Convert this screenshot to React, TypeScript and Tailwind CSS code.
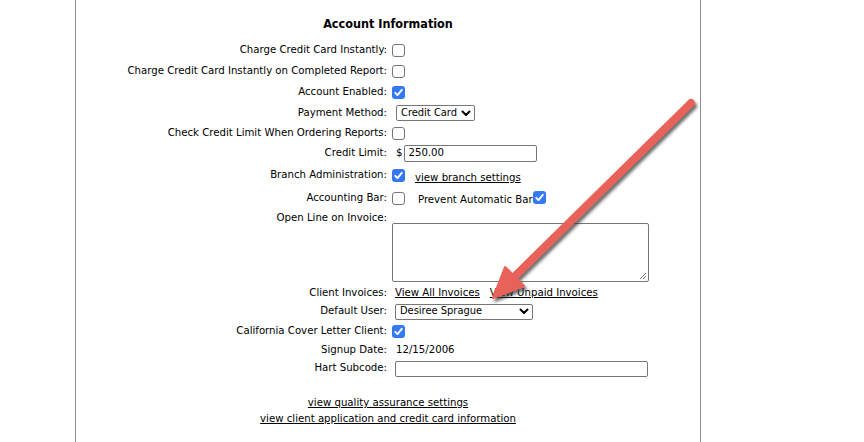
import React from "react";

const font = { fontFamily: '"DejaVu Sans Condensed", "DejaVu Sans", sans-serif' };

function Cb({ checked = false, className = "" }: { checked?: boolean; className?: string }) {
  if (checked) {
    return (
      <span className={"inline-flex h-[13px] w-[13px] shrink-0 items-center justify-center rounded-[3px] bg-[#3478f6] " + className}>
        <svg width="11" height="11" viewBox="0 0 11 11">
          <path d="M2.2 5.8 L4.5 8.1 L8.8 2.8" fill="none" stroke="#fff" strokeWidth="1.9" strokeLinecap="round" strokeLinejoin="round" />
        </svg>
      </span>
    );
  }
  return <span className={"inline-block h-[13px] w-[13px] shrink-0 rounded-[3px] border border-[#767676] bg-white " + className} />;
}

function Chevron() {
  return (
    <svg width="10" height="7" viewBox="0 0 10 7">
      <path d="M1.5 1.5 L5 5 L8.5 1.5" fill="none" stroke="#000" strokeWidth="2" strokeLinecap="round" strokeLinejoin="round" />
    </svg>
  );
}

function Select({ text, w, className = "" }: { text: string; w: string; className?: string }) {
  return (
    <span className={"flex h-[16px] items-center justify-between rounded-[2px] border border-[#767676] bg-white pl-[4px] pr-[3px] text-[11px] " + w + " " + className}>
      <span>{text}</span>
      <Chevron />
    </span>
  );
}

function Row({ label, h, children, top = false }: { label: string; h: string; children?: React.ReactNode; top?: boolean }) {
  return (
    <div className={"flex " + h + (top ? " items-start" : " items-center")}>
      <div className={"w-[311px] shrink-0 text-right " + (top ? "leading-[18px]" : "")}>{label}</div>
      <div className="flex flex-1 items-center pl-[1px]">{children}</div>
    </div>
  );
}

export default function App() {
  return (
    <div className="relative h-[442px] w-[864px] overflow-hidden bg-white text-[11.3px] text-black" style={font}>
      <div className="ml-[75px] h-full w-[626px] border-x border-[#8c8c8c]">
        <div className="flex h-[40px] items-start justify-center pt-[16px] text-[12.5px] font-bold leading-[16px]">Account Information</div>
        <Row label="Charge Credit Card Instantly:" h="h-[21px]"><Cb className="ml-[4px]" /></Row>
        <Row label="Charge Credit Card Instantly on Completed Report:" h="h-[21px]"><Cb className="ml-[4px]" /></Row>
        <Row label="Account Enabled:" h="h-[21px]"><Cb checked className="ml-[4px]" /></Row>
        <Row label="Payment Method:" h="h-[20px]"><Select text="Credit Card" w="w-[79px]" className="ml-[8px]" /></Row>
        <Row label="Check Credit Limit When Ordering Reports:" h="h-[21px]"><Cb className="ml-[4px]" /></Row>
        <Row label="Credit Limit:" h="h-[19px]">
          <span className="ml-[8px]">$</span>
          <span className="ml-[2px] flex h-[17px] w-[133px] items-center rounded-[2px] border border-[#767676] pl-[3px]">250.00</span>
        </Row>
        <Row label="Branch Administration:" h="h-[24px]">
          <Cb checked className="ml-[4px]" />
          <a className="ml-[10px] mt-[7px] underline">view branch settings</a>
        </Row>
        <Row label="Accounting Bar:" h="h-[22px]">
          <Cb className="ml-[4px]" />
          <span className="ml-[13px] mt-[4px]">Prevent Automatic Bar</span>
          <Cb checked className="-mt-[1px]" />
        </Row>
        <Row label="Open Line on Invoice:" h="h-[76px]" top>
          <div className="relative ml-[4px] mt-[14px] h-[59px] w-[257px] rounded-[2px] border border-[#767676]">
            <svg className="absolute bottom-[1px] right-[1px]" width="8" height="8" viewBox="0 0 8 8">
              <path d="M7 1 L1 7 M7 4 L4 7" stroke="#777" strokeWidth="1" />
            </svg>
          </div>
        </Row>
        <Row label="Client Invoices:" h="h-[17px]">
          <a className="ml-[7px] underline">View All Invoices</a>
          <a className="ml-[10px] underline">View Unpaid Invoices</a>
        </Row>
        <Row label="Default User:" h="h-[19px]"><Select text="Desiree Sprague" w="w-[138px]" className="ml-[7px]" /></Row>
        <Row label="California Cover Letter Client:" h="h-[20px]"><Cb checked className="ml-[4px]" /></Row>
        <Row label="Signup Date:" h="h-[18px]"><span className="ml-[8px]">12/15/2006</span></Row>
        <Row label="Hart Subcode:" h="h-[19px]">
          <span className="ml-[7px] h-[16px] w-[253px] rounded-[2px] border border-[#767676]" />
        </Row>
        <div className="mt-[17px] flex flex-col items-center leading-[16px]">
          <a className="underline">view quality assurance settings</a>
          <a className="underline">view client application and credit card information</a>
        </div>
      </div>
      <svg className="pointer-events-none absolute left-0 top-0" width="864" height="442" viewBox="0 0 864 442">
        <defs>
          <filter id="sh" x="-20%" y="-20%" width="140%" height="140%">
            <feDropShadow dx="2" dy="3" stdDeviation="1.6" floodColor="#333" floodOpacity="0.7" />
          </filter>
        </defs>
        <g filter="url(#sh)">
          <line x1="691" y1="103" x2="512" y2="279" stroke="#e8625a" strokeWidth="8" strokeLinecap="round" />
          <polygon points="493,298 505,267 524,286" fill="#e8625a" stroke="#e8625a" strokeWidth="2" strokeLinejoin="round" />
        </g>
      </svg>
    </div>
  );
}
